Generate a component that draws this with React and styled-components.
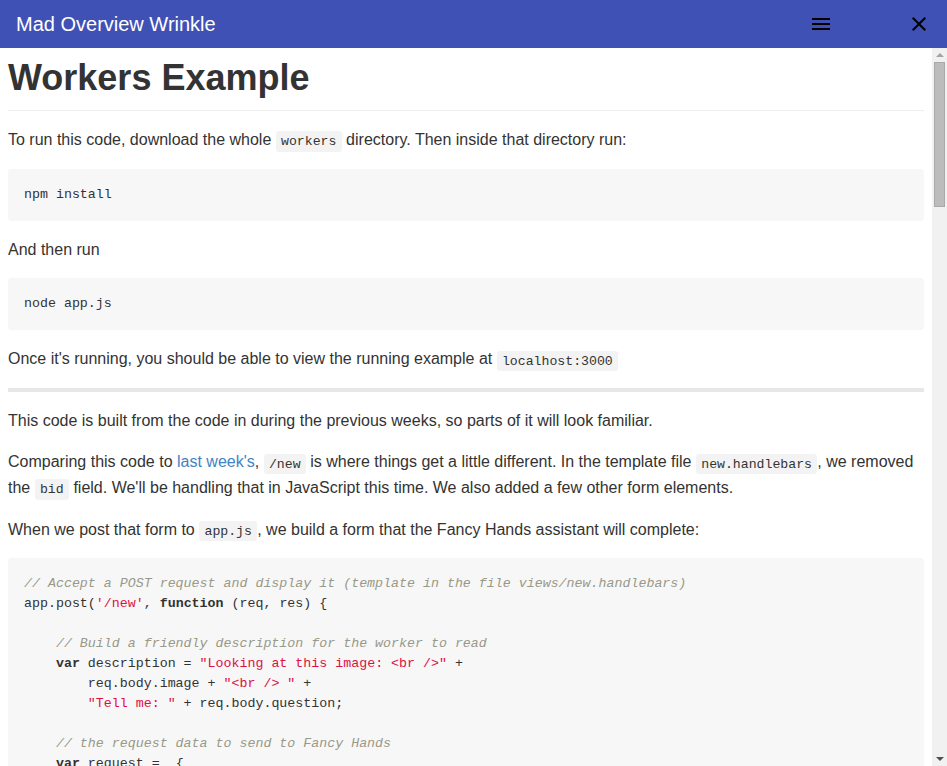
import React from "react";
import styled, { createGlobalStyle } from "styled-components";

const GlobalStyle = createGlobalStyle`
    html, body {
        margin: 0;
        height: 100%;
        overflow: hidden;
    }
    body {
        font-family: "Liberation Sans", Arial, sans-serif;
        color: #333;
        background: #fff;
    }
`;

const Page = styled.div`
    display: flex;
    flex-direction: column;
    height: 100vh;
`;

const TopBar = styled.header`
    display: flex;
    align-items: center;
    flex: 0 0 48px;
    height: 48px;
    padding: 0 16px;
    background-color: #3f51b5;
`;

const Title = styled.h2`
    flex: 1;
    margin: 0;
    font-size: 20px;
    font-weight: normal;
    color: #fff;
`;

const Actions = styled.div`
    display: flex;
    align-items: center;
    gap: 74px;
`;

const IconButton = styled.button`
    display: flex;
    padding: 0;
    border: none;
    background: transparent;
    color: #000;
    cursor: pointer;
`;

const Body = styled.div`
    display: flex;
    flex: 1;
    min-height: 0;
`;

const Content = styled.main`
    flex: 1;
    overflow-y: auto;
    scrollbar-width: none;
    padding: 8px;
    font-size: 16px;
    line-height: 1.6;

    &::-webkit-scrollbar {
        display: none;
    }
`;

const ScrollTrack = styled.div`
    display: flex;
    flex-direction: column;
    flex: 0 0 15px;
    width: 15px;
    background-color: #f1f1f1;
`;

const ArrowButton = styled.div`
    display: flex;
    align-items: center;
    justify-content: center;
    height: 14px;
    margin-top: ${(p) => (p.$down ? "auto" : "0")};
`;

const Arrow = styled.span`
    width: 0;
    height: 0;
    border-left: 4px solid transparent;
    border-right: 4px solid transparent;
    ${(p) =>
        p.$down
            ? "border-top: 4px solid #505050;"
            : "border-bottom: 4px solid #a3a3a3;"}
`;

const Thumb = styled.div`
    height: 145px;
    margin: 0 2px;
    background-color: #bcbcbc;
    border: 1px solid #a9a9a9;
    box-sizing: border-box;
`;

const Heading = styled.h1`
    margin: 0 0 16px;
    padding-bottom: 0.3em;
    font-size: 36px;
    line-height: 1.2;
    font-weight: bold;
    border-bottom: 1px solid #eee;
`;

const Para = styled.p`
    margin: 0 0 16px;
`;

const Link = styled.a`
    color: #4183c4;
    text-decoration: none;
`;

const Code = styled.code`
    font-family: "Liberation Mono", Consolas, monospace;
    font-size: 13.2px;
    padding: 0.2em 0.4em;
    background-color: #f3f3f3;
    border-radius: 3px;
`;

const Pre = styled.pre`
    margin: 0 0 16px;
    padding: 16px;
    background-color: #f7f7f7;
    border-radius: 3px;
    font-family: "Liberation Mono", Consolas, monospace;
    font-size: 13.3px;
    line-height: 20px;
    overflow: hidden;
`;

const Rule = styled.hr`
    height: 4px;
    margin: 16px 0;
    padding: 0;
    border: none;
    background-color: #e7e7e7;
`;

const Comment = styled.span`
    color: #998;
    font-style: italic;
`;

const Str = styled.span`
    color: #d14;
`;

const Kw = styled.span`
    font-weight: bold;
`;

const MenuIcon = () => (
    <svg width="24" height="24" viewBox="0 0 24 24" fill="currentColor">
        <path d="M3 18h18v-2H3v2zm0-5h18v-2H3v2zm0-7v2h18V6H3z" />
    </svg>
);

const CloseIcon = () => (
    <svg width="24" height="24" viewBox="0 0 24 24" fill="currentColor">
        <path d="M19 6.41L17.59 5 12 10.59 6.41 5 5 6.41 10.59 12 5 17.59 6.41 19 12 13.41 17.59 19 19 17.59 13.41 12z" />
    </svg>
);

const App = () => {
    return (
        <>
            <GlobalStyle />
            <Page>
                <TopBar>
                    <Title>Mad Overview Wrinkle</Title>
                    <Actions>
                        <IconButton aria-label="menu"><MenuIcon /></IconButton>
                        <IconButton aria-label="close"><CloseIcon /></IconButton>
                    </Actions>
                </TopBar>
                <Body>
                    <Content>
                        <Heading>Workers Example</Heading>
                        <Para>
                            To run this code, download the whole <Code>workers</Code> directory. Then inside that directory run:
                        </Para>
                        <Pre>npm install</Pre>
                        <Para>And then run</Para>
                        <Pre>node app.js</Pre>
                        <Para>
                            Once it's running, you should be able to view the running example at <Code>localhost:3000</Code>
                        </Para>
                        <Rule />
                        <Para>This code is built from the code in during the previous weeks, so parts of it will look familiar.</Para>
                        <Para>
                            Comparing this code to <Link href="#">last week's</Link>, <Code>/new</Code> is where things get a little different. In the template file <Code>new.handlebars</Code>, we removed the <Code>bid</Code> field. We'll be handling that in JavaScript this time. We also added a few other form elements.
                        </Para>
                        <Para>
                            When we post that form to <Code>app.js</Code>, we build a form that the Fancy Hands assistant will complete:
                        </Para>
                        <Pre>
<Comment>// Accept a POST request and display it (template in the file views/new.handlebars)</Comment>{"\n"}
app.post(<Str>'/new'</Str>, <Kw>function</Kw> (req, res) {"{"}{"\n"}
{"\n"}
{"    "}<Comment>// Build a friendly description for the worker to read</Comment>{"\n"}
{"    "}<Kw>var</Kw> description = <Str>"Looking at this image: &lt;br /&gt;"</Str> +{"\n"}
{"        "}req.body.image + <Str>"&lt;br /&gt; "</Str> +{"\n"}
{"        "}<Str>"Tell me: "</Str> + req.body.question;{"\n"}
{"\n"}
{"    "}<Comment>// the request data to send to Fancy Hands</Comment>{"\n"}
{"    "}<Kw>var</Kw> request =  {"{"}{"\n"}
{"        "}title: <Str>'Describe this image'</Str>,{"\n"}
{"        "}description: description,{"\n"}
{"        "}bid: <Str>'1.00'</Str>,{"\n"}
{"        "}expiration_date: expiration.toISOString(),{"\n"}
{"        "}custom_fields: JSON.stringify(fields){"\n"}
{"    "}{"}"};{"\n"}
{"\n"}
{"    "}<Comment>// send it off and show the result</Comment>{"\n"}
{"    "}fancyhands.custom_create(request, <Kw>function</Kw> (err, data) {"{"}{"\n"}
{"        "}<Kw>if</Kw> (err) {"{"}{"\n"}
{"            "}<Kw>return</Kw> res.send(<Str>'Something went wrong'</Str>);{"\n"}
{"        "}{"}"}{"\n"}
{"        "}res.render(<Str>'new'</Str>, {"{"} request: data {"}"});{"\n"}
{"    "}{"}"});{"\n"}
{"}"});
                        </Pre>
                        <Para>
                            The <Code>custom_fields</Code> array describes each field the assistant sees. Every field needs a <Code>label</Code>, a <Code>type</Code> and a <Code>field_name</Code>, which is the key we get back when the request is complete.
                        </Para>
                        <Para>
                            Once the request has been completed, Fancy Hands will post the results back to our callback URL. We handle that with a new route:
                        </Para>
                        <Pre>
<Comment>// Fancy Hands calls this when a request changes status</Comment>{"\n"}
app.post(<Str>'/callback'</Str>, <Kw>function</Kw> (req, res) {"{"}{"\n"}
{"    "}<Kw>var</Kw> data = req.body;{"\n"}
{"\n"}
{"    "}<Kw>if</Kw> (data.status === <Str>'complete'</Str>) {"{"}{"\n"}
{"        "}results.push(data.custom_fields);{"\n"}
{"    "}{"}"}{"\n"}
{"\n"}
{"    "}res.send(<Str>'ok'</Str>);{"\n"}
{"}"});
                        </Pre>
                        <Para>
                            That's all there is to it. Next week we'll look at cancelling requests and handling the ones that expire before anyone picks them up.
                        </Para>
                    </Content>
                    <ScrollTrack>
                        <ArrowButton><Arrow /></ArrowButton>
                        <Thumb />
                        <ArrowButton $down><Arrow $down /></ArrowButton>
                    </ScrollTrack>
                </Body>
            </Page>
        </>
    );
};

export default App;
